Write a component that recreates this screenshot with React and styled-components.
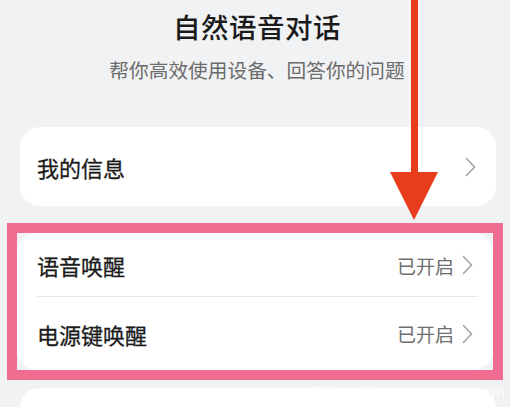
import React from 'react'
import styled, { createGlobalStyle } from 'styled-components'

const GlobalStyle = createGlobalStyle`
    html, body {
        margin: 0;
        padding: 0;
        background: #f1f2f4;
    }
    body {
        font-family: "Noto Sans CJK SC", "Noto Sans", sans-serif;
        overflow: hidden;
    }
`

const Page = styled.div`
    position: relative;
    width: 510px;
    height: 407px;
    overflow: hidden;
    background: #f1f2f4;
`

const Header = styled.header`
    display: flex;
    flex-direction: column;
    align-items: center;
    padding-top: 8px;
    margin-left: 4px;
`

const Title = styled.h1`
    margin: 0;
    font-size: 27.5px;
    line-height: 36px;
    font-weight: 500;
    color: #1a1a1a;
    letter-spacing: 0.5px;
`

const Subtitle = styled.p`
    margin: 13px 0 0;
    font-size: 19.7px;
    line-height: 26px;
    font-weight: 400;
    color: #6b6b6b;
`

const Card = styled.div`
    background: #fff;
    border-radius: 20px;
    margin: ${p => p.$margin || '0'};
    display: flex;
    flex-direction: column;
`

const Highlight = styled.div`
    margin: 17px 7px 0 7px;
    border: 10px solid #ef6d90;
    background: #f1f2f4;
`

const Row = styled.div`
    display: flex;
    align-items: center;
    justify-content: space-between;
    height: ${p => p.$height || 64}px;
    padding: 0 20px 0 ${p => p.$left || 17}px;
    position: relative;
    &:not(:last-child):after {
        content: '';
        position: absolute;
        left: 20px;
        right: 15px;
        bottom: 0;
        height: 1px;
        background: #e6e6e6;
    }
`

const Label = styled.span`
    font-size: 22px;
    font-weight: 400;
    color: #1b1b1b;
    -webkit-text-stroke: 0.3px #1b1b1b;
`

const Value = styled.span`
    display: flex;
    align-items: center;
    gap: 8px;
    font-size: 19px;
    color: #6e6e6e;
`

const Chevron = () => (
    <svg width="11" height="20" viewBox="0 0 11 20">
        <path d="M1.5 1.5 L9.5 10 L1.5 18.5" fill="none" stroke="#a3a3a3" strokeWidth="1.6" strokeLinecap="round" strokeLinejoin="round" />
    </svg>
)

const Arrow = styled.svg`
    position: absolute;
    left: 385px;
    top: 0;
`

const Watermark = styled.span`
    position: absolute;
    left: 296px;
    top: 381px;
    font-size: 15px;
    color: rgba(255, 255, 255, 0.85);
    letter-spacing: 1px;
`

function App() {
    return (
        <>
            <GlobalStyle />
            <Page>
                <Header>
                    <Title>自然语音对话</Title>
                    <Subtitle>帮你高效使用设备、回答你的问题</Subtitle>
                </Header>
                <Card $margin="44px 14px 0 20px">
                    <Row $height={79}>
                        <Label>我的信息</Label>
                        <Chevron />
                    </Row>
                </Card>
                <Highlight>
                    <Card>
                        <Row $left={20} $height={64}>
                            <Label>语音唤醒</Label>
                            <Value>已开启<Chevron /></Value>
                        </Row>
                        <Row $left={20} $height={73}>
                            <Label>电源键唤醒</Label>
                            <Value>已开启<Chevron /></Value>
                        </Row>
                    </Card>
                </Highlight>
                <Card $margin="8px 14px 0 20px" style={{ height: 60 }} />
                <Watermark>创新科技网 www.cxkjw.com</Watermark>
                <Arrow width="60" height="225" viewBox="0 0 60 225">
                    <rect x="26" y="0" width="7" height="176" fill="#e73d1c" />
                    <polygon points="5,172 53,172 29,220" fill="#e73d1c" />
                </Arrow>
            </Page>
        </>
    )
}

export default App
